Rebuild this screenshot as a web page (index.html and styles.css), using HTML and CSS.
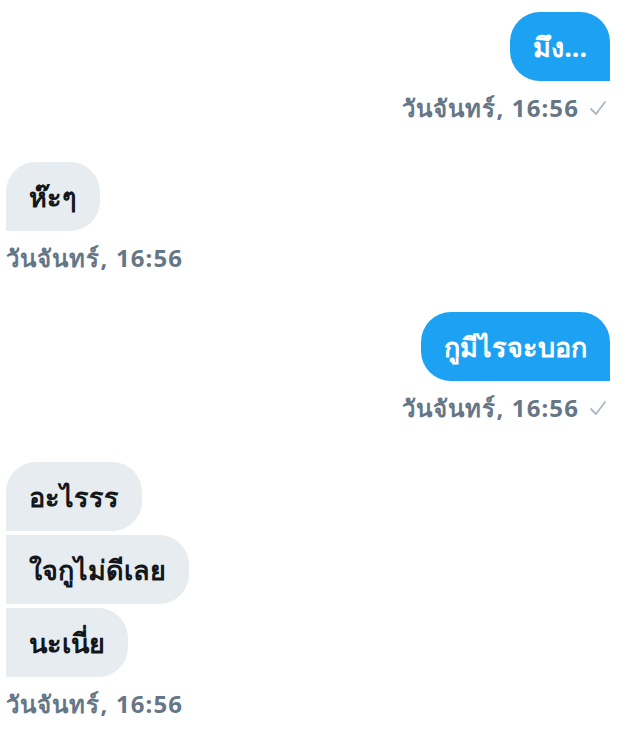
FILE: index.html
```html
<!DOCTYPE html>
<html lang="th">
<head>
  <meta charset="UTF-8">
  <meta name="viewport" content="width=device-width, initial-scale=1.0">
  <title>ข้อความ</title>
  <link rel="stylesheet" href="styles.css">
</head>
<body>

<div class="chat">

  <div class="group sent">
    <div class="bubble">มึง...</div>
    <div class="meta">วันจันทร์, 16:56
      <svg class="check" viewBox="0 0 18 18"><polyline points="2,10 7,15 16,3"/></svg>
    </div>
  </div>

  <div class="group received">
    <div class="bubble">ห๊ะๆ</div>
    <div class="meta">วันจันทร์, 16:56</div>
  </div>

  <div class="group sent">
    <div class="bubble">กูมีไรจะบอก</div>
    <div class="meta">วันจันทร์, 16:56
      <svg class="check" viewBox="0 0 18 18"><polyline points="2,10 7,15 16,3"/></svg>
    </div>
  </div>

  <div class="group received">
    <div class="bubble">อะไรรร</div>
    <div class="bubble">ใจกูไม่ดีเลย</div>
    <div class="bubble">นะเนี่ย</div>
    <div class="meta">วันจันทร์, 16:56</div>
  </div>

</div>

</body>
</html>
```

FILE: styles.css
```css
:root {
  --blue: #1da1f2;
  --grey-bubble: #e6ecf0;
  --text: #14171a;
  --meta: #657786;
}
body {
  margin: 0;
  background: #fff;
  font-family: 'Noto Sans', 'DejaVu Sans', sans-serif;
  color: var(--text);
}
.chat {
  padding: 12px 21px 0 6px;
  display: flex;
  flex-direction: column;
  gap: 39px;
}
.group {
  display: flex;
  flex-direction: column;
  gap: 4px;
}
.group.sent {
  align-items: flex-end;
}
.group.received {
  align-items: flex-start;
}
.bubble {
  font-size: 27px;
  font-weight: bold;
  line-height: 37px;
  padding: 16px 23px;
  border-radius: 30px;
}
.sent .bubble {
  background: var(--blue);
  color: #fff;
  border-bottom-right-radius: 0;
}
.received .bubble {
  background: var(--grey-bubble);
  border-bottom-left-radius: 0;
}
.received .bubble + .bubble {
  border-top-left-radius: 0;
}
.meta {
  margin-top: 8px;
  font-size: 24px;
  font-weight: bold;
  letter-spacing: 1.1px;
  line-height: 30px;
  color: var(--meta);
  display: flex;
  align-items: center;
  gap: 10px;
}
.sent .meta {
  margin-right: 3px;
}
.check {
  width: 18px;
  height: 18px;
  fill: none;
  stroke: #aab8c2;
  stroke-width: 1.8;
  stroke-linecap: round;
  stroke-linejoin: round;
}
```
